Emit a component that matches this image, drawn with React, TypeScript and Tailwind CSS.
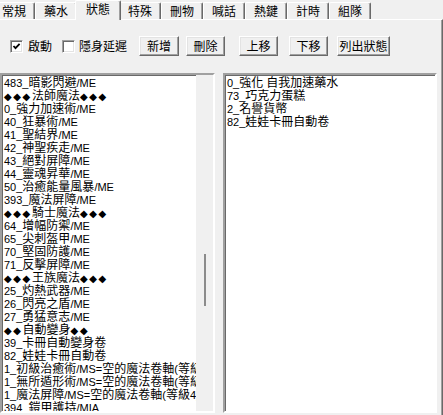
import React from 'react'

const TABS = ['常規', '藥水', '狀態', '特殊', '刪物', '喊話', '熱鍵', '計時', '組隊']

const LEFT = [
  '483_暗影閃避/ME',
  '◆◆◆法師魔法◆◆◆',
  '0_強力加速術/ME',
  '40_狂暴術/ME',
  '41_聖結界/ME',
  '42_神聖疾走/ME',
  '43_絕對屏障/ME',
  '44_靈魂昇華/ME',
  '50_治癒能量風暴/ME',
  '393_魔法屏障/ME',
  '◆◆◆騎士魔法◆◆◆',
  '64_增幅防禦/ME',
  '65_尖刺盔甲/ME',
  '70_堅固防護/ME',
  '71_反擊屏障/ME',
  '◆◆◆王族魔法◆◆◆',
  '25_灼熱武器/ME',
  '26_閃亮之盾/ME',
  '27_勇猛意志/ME',
  '◆◆自動變身◆◆',
  '39_卡冊自動變身卷',
  '82_娃娃卡冊自動卷',
  '1_初級治癒術/MS=空的魔法卷軸(等級1)',
  '1_無所遁形術/MS=空的魔法卷軸(等級2)',
  '1_魔法屏障/MS=空的魔法卷軸(等級4)',
  '394_鎧甲護持/MIA',
]

const RIGHT = ['0_強化 自我加速藥水', '73_巧克力蛋糕', '2_名譽貨幣', '82_娃娃卡冊自動卷']

// latin runs in a tahoma-ish size, diamonds in a narrower font
function Txt({ s }: { s: string }) {
  const parts = s.split(/([\x20-\x7e]+|◆+)/).filter(Boolean)
  return (
    <>
      {parts.map((p, i) =>
        /^◆+$/.test(p) ? (
          <span key={i} className="font-['DejaVu_Sans'] text-[10px] tracking-[1.6px]">{p}</span>
        ) : /^[\x20-\x7e]+$/.test(p) ? (
          <span key={i} className="font-['Liberation_Sans'] text-[11px]">{p}</span>
        ) : (
          <span key={i}>{p}</span>
        )
      )}
    </>
  )
}

function Check({ on }: { on?: boolean }) {
  return (
    <div className="w-[13px] h-[13px] bg-white border border-t-[#a0a0a0] border-l-[#a0a0a0] border-b-white border-r-white shadow-[inset_1px_1px_0_#696969,inset_-1px_-1px_0_#e3e3e3] flex items-center justify-center">
      {on && (
        <svg width="9" height="9" viewBox="0 0 9 9">
          <polyline points="1.5,4 3.5,6.2 7.6,1.8" fill="none" stroke="#000" strokeWidth="1.8" />
        </svg>
      )}
    </div>
  )
}

function Btn({ label, className }: { label: string; className: string }) {
  return (
    <button className={`h-[20px] bg-[#f0f0f0] border border-t-white border-l-white border-b-[#696969] border-r-[#696969] shadow-[inset_-1px_-1px_0_#a0a0a0,inset_1px_1px_0_#e3e3e3] leading-[18px] text-center ${className}`}>
      {label}
    </button>
  )
}

function ListBox({ items, scroll, className }: { items: string[]; scroll?: boolean; className: string }) {
  return (
    <div className={`h-[340px] bg-white flex border-2 border-t-[#a0a0a0] border-l-[#a0a0a0] border-b-white border-r-white ${className}`}>
      <div className="flex-1 overflow-hidden pl-[2px] shadow-[inset_1px_1px_0_#696969]">
        {items.map((t, i) => (
          <div key={i} className="h-[13px] leading-[13px] whitespace-nowrap">
            <Txt s={t} />
          </div>
        ))}
      </div>
      {scroll && (
        <div className="w-[17px] bg-[#f0f0f0] pt-[179px] flex justify-center">
          <div className="w-[2px] h-[52px] bg-[#8b8b8b]" />
        </div>
      )}
    </div>
  )
}

export default function App() {
  return (
    <div className="w-[443px] h-[415px] overflow-hidden bg-[#f0f0f0] font-['Noto_Sans_CJK_TC',sans-serif] text-[12px] text-black">
      <div className="relative z-10 flex items-end h-[20px] -ml-[7px]">
        {TABS.map((t, i) =>
          i === 2 ? (
            <div
              key={t}
              className="relative z-10 -mx-[2px] w-[46px] h-[20px] bg-[#f0f0f0] border-t border-l border-r border-t-white border-l-white border-r-[#696969] shadow-[inset_-1px_0_0_#a0a0a0] rounded-t-[2px] text-center leading-[14px] pt-[1px]"
            >
              {t}
            </div>
          ) : (
            <div
              key={t}
              className="w-[42px] h-[17px] mb-px bg-[#f0f0f0] border-t border-l border-r border-t-white border-l-white border-r-[#696969] shadow-[inset_-1px_0_0_#a0a0a0] rounded-t-[2px] text-center leading-[14px] pt-[1px]"
            >
              {t}
            </div>
          )
        )}
      </div>

      <div className="-mt-px h-[400px] border-t border-r border-t-white border-r-[#696969] shadow-[inset_-1px_0_0_#a0a0a0]">
        <div className="flex items-center h-[20px] mt-[16px]">
          <div className="ml-[10px]"><Check on /></div>
          <span className="ml-[5px]">啟動</span>
          <div className="ml-[10px]"><Check /></div>
          <span className="ml-[4px]">隱身延遲</span>
          <Btn label="新增" className="ml-[12px] w-[40px]" />
          <Btn label="刪除" className="ml-[7px] w-[39px]" />
          <Btn label="上移" className="ml-[14px] w-[39px]" />
          <Btn label="下移" className="ml-[11px] w-[39px]" />
          <Btn label="列出狀態" className="ml-[9px] w-[53px]" />
        </div>

        <div className="flex mt-[17px]">
          <ListBox items={LEFT} scroll className="w-[215px]" />
          <ListBox items={RIGHT} className="ml-[8px] w-[214px]" />
        </div>
      </div>
    </div>
  )
}
